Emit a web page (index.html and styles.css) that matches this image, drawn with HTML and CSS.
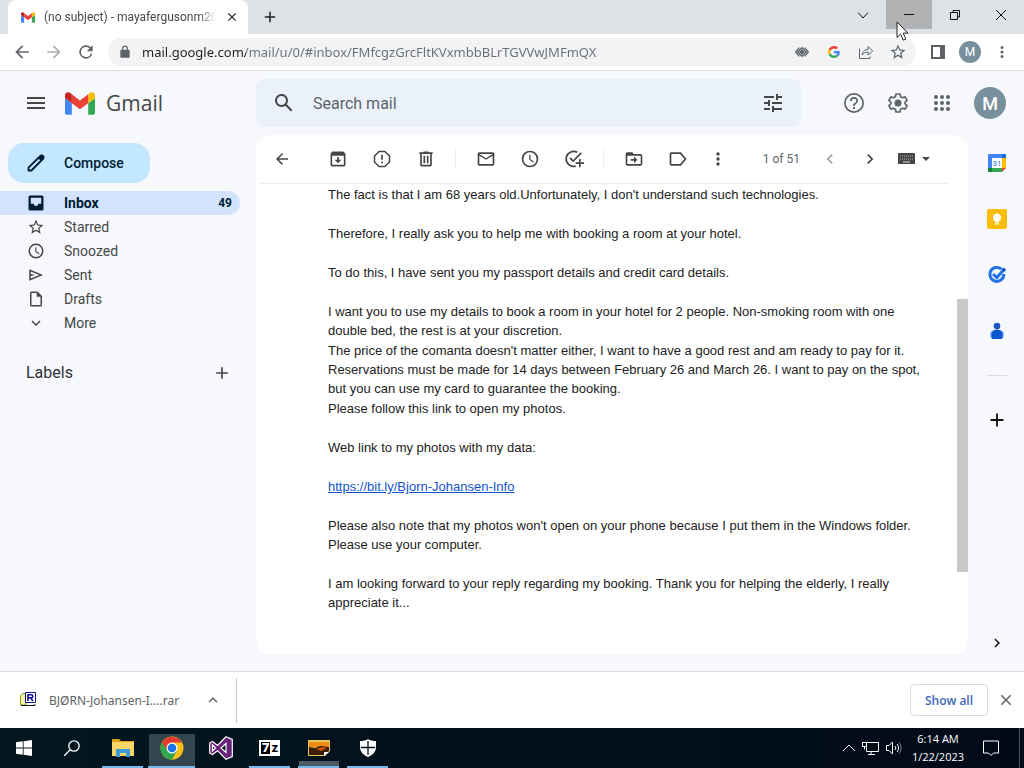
FILE: index.html
```html
<!DOCTYPE html>
<html lang="en">
<head>
    <meta charset="UTF-8">
    <meta name="viewport" content="width=device-width, initial-scale=1.0">
    <title>(no subject) - Gmail</title>
    <link rel="stylesheet" href="styles.css">
</head>
<body>

    <svg class="sprite" aria-hidden="true">
        <symbol id="gmail" viewBox="52 42 88 66">
            <path fill="#4285f4" d="M58 108h14V74L52 59v43c0 3.32 2.69 6 6 6"/>
            <path fill="#34a853" d="M120 108h14c3.32 0 6-2.69 6-6V59l-20 15"/>
            <path fill="#fbbc04" d="M120 48v26l20-15v-8c0-7.42-8.47-11.65-14.4-7.2"/>
            <path fill="#ea4335" d="M72 74V48l24 18 24-18v26L96 92"/>
            <path fill="#c5221f" d="M52 51v8l20 15V48l-5.6-4.2c-5.94-4.45-14.4-.22-14.4 7.2"/>
        </symbol>
        <symbol id="clock" viewBox="0 0 24 24">
            <path d="M12 2a10 10 0 1 0 0 20 10 10 0 0 0 0-20zm0 18a8 8 0 1 1 0-16 8 8 0 0 1 0 16zm.5-13H11v6l4.8 3.2.9-1.3-4.2-2.5z"/>
        </symbol>
        <symbol id="star" viewBox="0 0 24 24">
            <path d="M22 9.24l-7.19-.62L12 2 9.19 8.63 2 9.24l5.46 4.73L5.82 21 12 17.27 18.18 21l-1.63-7.03L22 9.24zM12 15.4l-3.76 2.27 1-4.28-3.32-2.88 4.38-.38L12 6.1l1.71 4.04 4.38.38-3.32 2.88 1 4.28L12 15.4z"/>
        </symbol>
        <symbol id="dots" viewBox="0 0 24 24">
            <path d="M12 8a2 2 0 1 0 0-4 2 2 0 0 0 0 4zm0 2a2 2 0 1 0 0 4 2 2 0 0 0 0-4zm0 6a2 2 0 1 0 0 4 2 2 0 0 0 0-4z"/>
        </symbol>
        <symbol id="arrow" viewBox="0 0 24 24">
            <path d="M20 11H7.83l5.59-5.59L12 4l-8 8 8 8 1.41-1.41L7.83 13H20v-2z"/>
        </symbol>
        <symbol id="chevron" viewBox="0 0 24 24">
            <path d="M10 6 8.6 7.4 13.2 12l-4.6 4.6L10 18l6-6z"/>
        </symbol>
        <symbol id="plus" viewBox="0 0 24 24">
            <path d="M19 13h-6v6h-2v-6H5v-2h6V5h2v6h6v2z"/>
        </symbol>
        <symbol id="cross" viewBox="0 0 24 24">
            <path d="M19 6.4 17.6 5 12 10.6 6.4 5 5 6.4l5.6 5.6L5 17.6 6.4 19l5.6-5.6 5.6 5.6 1.4-1.4-5.6-5.6z"/>
        </symbol>
    </svg>

    <div class="tabstrip">
        <div class="tab">
            <svg class="favicon"><use href="#gmail"/></svg>
            <span class="tab-title">(no subject) - mayafergusonm20</span>
            <button class="tab-close" aria-label="Close tab"><svg class="i14"><use href="#cross"/></svg></button>
        </div>
        <button class="new-tab" aria-label="New tab"><svg class="i18"><use href="#plus"/></svg></button>
        <div class="window-buttons">
            <button aria-label="Search tabs"><svg class="i12 line" viewBox="0 0 12 12"><path d="M1 3.500 6 9l5-5.500"/></svg></button>
            <button class="minimize" aria-label="Minimize">
                <svg class="i12 line" viewBox="0 0 12 12"><path d="M1 5.500h10"/></svg>
                <svg class="cursor" viewBox="0 0 13 20"><path d="M1 1v15.500l3.600-3.400 2.600 6 2.600-1.100-2.600-5.900H12z" fill="#fff" stroke="#222"/></svg>
            </button>
            <button aria-label="Restore"><svg class="i12 line" viewBox="0 0 12 12"><path d="M1.500 3.500h7v7h-7zM4 3V1.500h6.500V8H9"/></svg></button>
            <button aria-label="Close"><svg class="i12 line" viewBox="0 0 12 12"><path d="m1 1 10 10M11 1 1 11"/></svg></button>
        </div>
    </div>

    <div class="toolbar">
        <button class="tool" aria-label="Back"><svg class="i20"><use href="#arrow"/></svg></button>
        <button class="tool disabled" aria-label="Forward"><svg class="i20 flip"><use href="#arrow"/></svg></button>
        <button class="tool" aria-label="Reload"><svg class="i20" viewBox="0 0 24 24"><path d="M17.650 6.350A8 8 0 1 0 19.730 14h-2.080A6 6 0 1 1 12 6c1.660 0 3.140.690 4.220 1.780L13 11h7V4z"/></svg></button>
        <div class="omnibox">
            <svg class="i16 lock" viewBox="0 0 24 24"><path d="M18 8h-1V6A5 5 0 0 0 7 6v2H6a2 2 0 0 0-2 2v10c0 1.100.900 2 2 2h12a2 2 0 0 0 2-2V10a2 2 0 0 0-2-2zM9 8V6a3 3 0 0 1 6 0v2z"/></svg>
            <input class="url" type="text" aria-label="Address" value="mail.google.com/mail/u/0/#inbox/FMfcgzGrcFltKVxmbbBLrTGVVwJMFmQX">
            <button class="tool" aria-label="Protocol handler"><svg class="i14" viewBox="0 0 16 16"><path d="M8 2 14 8l-6 6-6-6z"/><path d="M5 3 .700 8 5 13M11 3l4.300 5-4.300 5" fill="none" stroke="#5f6368" stroke-width="1.500"/><path d="m8 4.500 3.500 3.500L8 11.500 4.500 8z" fill="none" stroke="#f1f3f4" stroke-width=".6"/></svg></button>
            <button class="tool" aria-label="Search with Google">
                <svg class="i12" viewBox="0 0 48 48">
                    <path fill="#ea4335" d="M24 9.500c3.540 0 6.710 1.220 9.210 3.600l6.850-6.850C35.900 2.380 30.470 0 24 0 14.620 0 6.510 5.380 2.560 13.220l7.980 6.190C12.430 13.720 17.740 9.500 24 9.500z"/>
                    <path fill="#4285f4" d="M46.980 24.550c0-1.570-.15-3.090-.38-4.550H24v9.020h12.940c-.58 2.960-2.260 5.480-4.780 7.180l7.730 6c4.510-4.180 7.090-10.360 7.090-17.650z"/>
                    <path fill="#fbbc05" d="M10.530 28.590A14.500 14.500 0 0 1 9.770 24c0-1.600.27-3.140.76-4.590l-7.980-6.190A23.900 23.900 0 0 0 0 24c0 3.880.92 7.540 2.560 10.780l7.970-6.190z"/>
                    <path fill="#34a853" d="M24 48c6.480 0 11.930-2.130 15.890-5.810l-7.730-6c-2.150 1.450-4.920 2.300-8.160 2.300-6.260 0-11.570-4.220-13.470-9.910l-7.980 6.190C6.510 42.620 14.620 48 24 48z"/>
                </svg>
            </button>
            <button class="tool" aria-label="Share"><svg class="i16 stroked" viewBox="0 0 16 16"><path d="M1.500 4.500v10h10.500v-2M4 11c.5-4 3-5.500 6-5.500V2.500L14.800 7 10 11V8C7.500 8 5.500 8.800 4 11z"/></svg></button>
            <button class="tool" aria-label="Bookmark"><svg class="i18"><use href="#star"/></svg></button>
        </div>
        <button class="tool panel-button" aria-label="Side panel"><svg class="i14" viewBox="0 0 14 14"><path d="M0 0h14v14H0zM2 2v10h7V2z" fill-rule="evenodd"/></svg></button>
        <button class="tool" aria-label="Profile"><span class="avatar small">M</span></button>
        <button class="tool" aria-label="Chrome menu"><svg class="i18"><use href="#dots"/></svg></button>
    </div>

    <div class="gmail">
        <header class="header">
            <div class="brand">
                <button class="menu" aria-label="Main menu"><svg class="i24" viewBox="0 0 24 24"><path d="M3 18h18v-2H3zm0-5h18v-2H3zm0-7v2h18V6z"/></svg></button>
                <a class="logo" href="#inbox"><svg class="logo-mark"><use href="#gmail"/></svg>Gmail</a>
            </div>
            <form class="search">
                <button type="button" aria-label="Search"><svg class="i24" viewBox="0 0 24 24"><path d="M20.490 19l-5.730-5.730A6.500 6.500 0 1 0 13.270 14.760L19 20.490 20.490 19zM5 9.500a4.500 4.500 0 1 1 9 0 4.500 4.500 0 0 1-9 0z"/></svg></button>
                <input type="text" aria-label="Search mail" placeholder="Search mail">
                <button type="button" aria-label="Search options"><svg class="i24" viewBox="0 0 24 24"><path d="M3 17v2h6v-2H3zM3 5v2h10V5H3zm10 16v-2h8v-2h-8v-2h-2v6h2zM7 9v2H3v2h4v2h2V9H7zm14 4v-2H11v2h10zm-6-4h2V7h4V5h-4V3h-2v6z"/></svg></button>
            </form>
            <div class="account">
                <button aria-label="Support"><svg class="i24" viewBox="0 0 24 24"><path d="M11 18h2v-2h-2v2zm1-16a10 10 0 1 0 0 20 10 10 0 0 0 0-20zm0 18.300a8.300 8.300 0 1 1 0-16.600 8.300 8.300 0 0 1 0 16.600zm0-14.300a4 4 0 0 0-4 4h1.700a2.300 2.300 0 1 1 4.600 0c0 2-3.300 1.750-3.300 5h2c0-2.250 3-2.500 3-5a4 4 0 0 0-4-4z"/></svg></button>
                <button aria-label="Settings"><svg class="i24" viewBox="0 0 24 24"><path d="M10 3h4l.6 2.700 1.900 1.100 2.600-.9 2 3.500-2 1.800v1.600l2 1.800-2 3.500-2.600-.9-1.900 1.100L14 21h-4l-.6-2.700-1.900-1.100-2.600.9-2-3.500 2-1.800v-1.600l-2-1.800 2-3.500 2.600.9 1.900-1.100z" fill="none" stroke="currentColor" stroke-width="1.700" stroke-linejoin="round"/><circle cx="12" cy="12" r="3.500"/></svg></button>
                <button aria-label="Google apps">
                    <svg class="i24" viewBox="0 0 24 24">
                        <circle cx="6" cy="6" r="2"/><circle cx="12" cy="6" r="2"/><circle cx="18" cy="6" r="2"/>
                        <circle cx="6" cy="12" r="2"/><circle cx="12" cy="12" r="2"/><circle cx="18" cy="12" r="2"/>
                        <circle cx="6" cy="18" r="2"/><circle cx="12" cy="18" r="2"/><circle cx="18" cy="18" r="2"/>
                    </svg>
                </button>
                <a class="avatar" href="#account">M</a>
            </div>
        </header>

        <div class="content">
            <aside class="sidebar">
                <button class="compose">
                    <svg class="i20" viewBox="0 0 24 24"><path d="M20.400 3.600a2.200 2.200 0 0 0-3.200 0L3 17.500V21h3.500L20.400 6.900a2.300 2.300 0 0 0 0-3.300z" fill="none" stroke="currentColor" stroke-width="2.200" stroke-linejoin="round"/><path d="m14 6 3-3h3l1.500 1.500V7l-3 3z"/></svg>
                    Compose
                </button>
                <nav class="folders">
                    <a class="active" href="#inbox"><svg class="i18" viewBox="0 0 24 24"><path d="M20 2H4a2 2 0 0 0-2 2v16c0 1.100.9 2 2 2h16a2 2 0 0 0 2-2V4a2 2 0 0 0-2-2zm-1 11h-4a3 3 0 0 1-6 0H5V5h14z"/></svg>Inbox<span class="count">49</span></a>
                    <a href="#starred"><svg class="i18"><use href="#star"/></svg>Starred</a>
                    <a href="#snoozed"><svg class="i18"><use href="#clock"/></svg>Snoozed</a>
                    <a href="#sent"><svg class="i18" viewBox="0 0 24 24"><path d="M3 4.200v15.600L21.500 12zM5 7.200 16.400 12 5 16.800v-3.500l6-1.300-6-1.300z"/></svg>Sent</a>
                    <a href="#drafts"><svg class="i18" viewBox="0 0 24 24"><path d="M14 2H6a2 2 0 0 0-2 2v16c0 1.100.9 2 2 2h12a2 2 0 0 0 2-2V8zm4 18H6V4h7v5h5z"/></svg>Drafts</a>
                    <a href="#more"><svg class="i18 down"><use href="#chevron"/></svg>More</a>
                </nav>
                <div class="labels">
                    <h2>Labels</h2>
                    <button aria-label="Create new label"><svg class="i20"><use href="#plus"/></svg></button>
                </div>
            </aside>

            <main class="mail">
                <div class="mail-toolbar">
                    <button class="back" aria-label="Back to Inbox"><svg class="i18"><use href="#arrow"/></svg></button>
                    <div class="group">
                        <button aria-label="Archive"><svg class="i20" viewBox="0 0 24 24"><path d="m20.500 5.200-1.400-1.700A1.500 1.500 0 0 0 18 3H6c-.5 0-.9.200-1.200.6L3.500 5.200C3.200 5.600 3 6 3 6.500V19c0 1.100.9 2 2 2h14a2 2 0 0 0 2-2V6.500c0-.5-.2-.9-.5-1.300zM5 19V8h14v11zM11 9.500V13H8l4 4 4-4h-3V9.500z"/></svg></button>
                        <button aria-label="Report spam"><svg class="i20" viewBox="0 0 24 24"><path d="M8.500 3h7L21 8.500v7L15.500 21h-7L3 15.500v-7z" fill="none" stroke="currentColor" stroke-width="1.800" stroke-linejoin="round"/><path d="M11 7h2v6h-2zm0 8h2v2h-2z"/></svg></button>
                        <button aria-label="Delete"><svg class="i20" viewBox="0 0 24 24"><path d="M15 4V3H9v1H4v2h1v13c0 1.100.9 2 2 2h10a2 2 0 0 0 2-2V6h1V4zm2 15H7V6h10zM9 8h2v9H9zm4 0h2v9h-2z"/></svg></button>
                    </div>
                    <div class="group divided">
                        <button aria-label="Mark as unread"><svg class="i20" viewBox="0 0 24 24"><path d="M20 4H4a2 2 0 0 0-2 2v12c0 1.100.9 2 2 2h16a2 2 0 0 0 2-2V6a2 2 0 0 0-2-2zm0 14H4V8l8 5 8-5zm-8-7L4 6h16z"/></svg></button>
                        <button aria-label="Snooze"><svg class="i20"><use href="#clock"/></svg></button>
                        <button aria-label="Add to tasks"><svg class="i20" viewBox="0 0 24 24"><path d="M16 4a9 9 0 1 0-2 16.500" fill="none" stroke="currentColor" stroke-width="2"/><path d="M21.500 5.500 11 16l-4.500-4.500L8 10l3 3.100 9-9.100zM18 12h2v4h4v2h-4v4h-2v-4h-4v-2h4z"/></svg></button>
                    </div>
                    <div class="group divided">
                        <button aria-label="Move to"><svg class="i20" viewBox="0 0 24 24"><path d="M20 6h-8l-2-2H4a2 2 0 0 0-2 2v12c0 1.100.9 2 2 2h16a2 2 0 0 0 2-2V8a2 2 0 0 0-2-2zm0 12H4V8h16zm-8-1 4-4-4-4v3H8v2h4z"/></svg></button>
                        <button aria-label="Labels"><svg class="i20" viewBox="0 0 24 24"><path d="M4 5h11l6 7-6 7H4a1 1 0 0 1-1-1V6a1 1 0 0 1 1-1z" fill="none" stroke="currentColor" stroke-width="2"/></svg></button>
                    </div>
                    <button class="more" aria-label="More"><svg class="i20"><use href="#dots"/></svg></button>
                    <div class="pager">
                        <span>1 of 51</span>
                        <button class="disabled" aria-label="Newer"><svg class="i20 flip"><use href="#chevron"/></svg></button>
                        <button aria-label="Older"><svg class="i20"><use href="#chevron"/></svg></button>
                        <button class="keyboard" aria-label="Input tools">
                            <svg class="i20" viewBox="0 0 20 20"><path d="M2 4h15a1 1 0 0 1 1 1v10H1V5a1 1 0 0 1 1-1z"/><path d="M3 7h13M3 10h13" stroke="#bbb" stroke-dasharray="1 1"/><path d="M6 13h7" stroke="#ddd"/></svg>
                            <svg class="caret" viewBox="0 0 8 4"><path d="M0 0h8L4 4z"/></svg>
                        </button>
                    </div>
                </div>
                <article class="message">
                    <p>The fact is that I am 68 years old.Unfortunately, I don't understand such technologies.</p>
                    <p>Therefore, I really ask you to help me with booking a room at your hotel.</p>
                    <p>To do this, I have sent you my passport details and credit card details.</p>
                    <div class="lines">
                        <p>I want you to use my details to book a room in your hotel for 2 people. Non-smoking room with one double bed, the rest is at your discretion.</p>
                        <p>The price of the comanta doesn't matter either, I want to have a good rest and am ready to pay for it. Reservations must be made for 14 days between February 26 and March 26. I want to pay on the spot, but you can use my card to guarantee the booking.</p>
                        <p>Please follow this link to open my photos.</p>
                    </div>
                    <p>Web link to my photos with my data:</p>
                    <p><a href="https://bit.ly/Bjorn-Johansen-Info">https://bit.ly/Bjorn-Johansen-Info</a></p>
                    <p>Please also note that my photos won't open on your phone because I put them in the Windows folder. Please use your computer.</p>
                    <p>I am looking forward to your reply regarding my booking. Thank you for helping the elderly, I really appreciate it...</p>
                </article>
                <div class="scroll-thumb"></div>
            </main>

            <aside class="apps-panel">
                <button aria-label="Calendar">
                    <svg class="i20" viewBox="0 0 20 20">
                        <path fill="#fff" d="M4 4h12v12H4z"/>
                        <path fill="#4285f4" d="M2 1h13v4H5v10H1V2a1 1 0 0 1 1-1z"/>
                        <path fill="#1967d2" d="M15 1h3a1 1 0 0 1 1 1v3h-4z"/>
                        <path fill="#fbbc04" d="M15 5h4v10h-4z"/>
                        <path fill="#34a853" d="M5 15h10v4H5z"/>
                        <path fill="#188038" d="M1 15h4v4H2a1 1 0 0 1-1-1z"/>
                        <path fill="#ea4335" d="M15 15h4l-4 4z"/>
                        <text x="10" y="13" text-anchor="middle" class="cal-day">31</text>
                    </svg>
                </button>
                <button aria-label="Keep"><svg class="i20" viewBox="0 0 20 20"><rect x="0" y="0" width="20" height="20" rx="2" fill="#fbbc04"/><circle cx="10" cy="8.500" r="4" fill="#fff"/><path fill="#fff" d="M8 11h4v2.500H8zM8 14.300h4v1.200H8z"/></svg></button>
                <button aria-label="Tasks"><svg class="i20" viewBox="0 0 20 20"><path d="M14.500 4.200A7 7 0 1 0 16.800 9" fill="none" stroke="#2373e8" stroke-width="3"/><path d="m6 9 3.800 3.500 7.700-8.500" fill="none" stroke="#2373e8" stroke-width="3"/><circle cx="16.800" cy="4.800" r="1.900" fill="#1557c0"/></svg></button>
                <button aria-label="Contacts"><svg class="i20" viewBox="0 0 20 20"><circle cx="10" cy="5" r="3.300" fill="#1a56c4"/><rect x="3.500" y="9.500" width="13" height="8.500" rx="3.500" fill="#4285f4"/><path d="M5 18v-5a5 4.500 0 0 1 10 0v5z" fill="#0b57d0"/></svg></button>
                <hr>
                <button aria-label="Get add-ons"><svg class="i24"><use href="#plus"/></svg></button>
                <button class="hide-panel" aria-label="Hide side panel"><svg class="i18"><use href="#chevron"/></svg></button>
            </aside>
        </div>
    </div>

    <div class="downloads">
        <div class="download">
            <svg class="i16" viewBox="0 0 16 16"><path d="M.500 13V4l2-2.500H6V13z" fill="#f4f4b0" stroke="#9a9a10"/><path d="M1 13.500h14V12" fill="none" stroke="#111"/><path d="M5.500.500h10v10h-10z" fill="#fff" stroke="#10108a"/><path d="M8 9V2.800h3.300a1.500 1.500 0 0 1 0 3H8m2.800 0 2 3.200" fill="none" stroke="#10108a" stroke-width="1.600"/></svg>
            <a href="#file">BJØRN-Johansen-I....rar</a>
            <button aria-label="File options"><svg class="i18 up"><use href="#chevron"/></svg></button>
        </div>
        <button class="show-all">Show all</button>
        <button class="downloads-close" aria-label="Close downloads"><svg class="i18"><use href="#cross"/></svg></button>
    </div>

    <footer class="taskbar">
        <button class="system" aria-label="Start"><svg class="i16" viewBox="0 0 16 16"><path d="M0 2.300 6.800 1.300v6.200H0zM7.600 1.200 16 0v7.500H7.600zM0 8.400h6.800v6.300L0 13.700zM7.600 8.400H16V16l-8.400-1.200z"/></svg></button>
        <button class="system" aria-label="Search"><svg class="i18" viewBox="0 0 18 18"><circle cx="11" cy="7" r="5.200" fill="none" stroke="#fff" stroke-width="1.300"/><path d="m7.200 10.800-6 6" stroke="#fff" stroke-width="1.300"/></svg></button>
        <button class="open first" aria-label="File Explorer"><svg class="i24" viewBox="0 0 24 24"><path fill="#e3a21a" d="M1 3h7l2 2h13v4H1z"/><path fill="#fbd566" d="M1 6h22v14H1z"/><path fill="#3f9bd6" d="M5 21v-8h14v8h-4v-4H9v4z"/></svg></button>
        <button class="open current" aria-label="Chrome">
            <svg class="i24" viewBox="0 0 48 48">
                <circle cx="24" cy="24" r="23" fill="#fbc116"/>
                <path fill="#2da94f" d="M24 24 4.100 12.500a23 23 0 0 0 19.900 34.500l10-17.500z"/>
                <path fill="#e33b2e" d="M24 13h19.900A23 23 0 0 0 4.100 12.500L14.500 29.500z"/>
                <circle cx="24" cy="24" r="11" fill="#fff"/>
                <circle cx="24" cy="24" r="8.600" fill="#1a73e8"/>
            </svg>
        </button>
        <button aria-label="Visual Studio"><svg class="i24" viewBox="0 0 24 24"><path fill="#68217a" stroke="#fff" stroke-width="1.200" d="M17 .800 23.300 3.500v17L17 23.200l-8.500-8.500L3.500 18.500.700 17V7l2.800-1.500 5 4zM17 7.500 12 12l5 4.500zM3.500 9v6l3-3z" fill-rule="evenodd"/></svg></button>
        <button class="open" aria-label="7-Zip"><span class="zip"><b>7</b>z</span></button>
        <button class="open stacked" aria-label="Pictures"><svg class="i22" viewBox="0 0 22 18"><path fill="#e7c25a" d="M0 1h22v11l-5 5H0z"/><path fill="#ee8b12" d="M1 3h20v5H1z"/><path fill="#3c1d08" d="m1 8 6 1 5-2 9 1v4l-5 4H1z"/><path fill="#c9520a" d="m8 10 6-2 5 1-6 3z"/><path fill="#fff" d="M16 17v-4h5z"/></svg></button>
        <button class="open" aria-label="Security"><svg class="i18" viewBox="0 0 18 18"><path d="M9 0c2 1.500 4.500 2 8 2v6c0 5-3.500 8-8 10-4.500-2-8-5-8-10V2c3.500 0 6-.5 8-2z"/><path d="M9 2v14M2 8.500h14" stroke="#041521" stroke-width="1.300"/></svg></button>
        <div class="tray">
            <svg class="i14 thin" viewBox="0 0 14 14"><path d="m1 10 6-6 6 6"/></svg>
            <svg class="i18 thin" viewBox="0 0 18 18"><path d="M5 3.500h11.500v9H4.500V8M9 12.500v3M6 15.500h7M.500 3.500h4v4h-4zM2.500 7.500v3"/></svg>
            <svg class="i16 thin" viewBox="0 0 16 16"><path d="M.500 5.500H3l3.500-3.500v12L3 10.500H.500zM9 6a3 3 0 0 1 0 4M11 4a6 6 0 0 1 0 8"/><path d="M13 2.500a8 8 0 0 1 0 11" stroke="#7d858f"/></svg>
            <div class="time"><span>6:14 AM</span><span>1/22/2023</span></div>
            <button class="notifications" aria-label="Notifications"><svg class="i18 thin" viewBox="0 0 18 18"><path d="M1.500 2h15v12h-5L9 16.500 6.500 14h-5z"/></svg></button>
        </div>
    </footer>

</body>
</html>
```

FILE: styles.css
```css
* {
    margin: 0;
    padding: 0;
    box-sizing: border-box;
}

body {
    display: flex;
    flex-direction: column;
    min-height: 100vh;
    font-family: Roboto, "Liberation Sans", sans-serif;
    font-size: 14px;
    color: #202124;
    background: #fff;
}

button {
    display: flex;
    align-items: center;
    justify-content: center;
    flex-shrink: 0;
    border: none;
    background: none;
    font: inherit;
    color: inherit;
    cursor: pointer;
}

input {
    border: none;
    outline: none;
    background: none;
    min-width: 0;
}

a {
    color: inherit;
    text-decoration: none;
}

svg {
    display: block;
    flex-shrink: 0;
    fill: currentColor;
}

.sprite {
    display: none;
}

.i12 { width: 12px; height: 12px; }
.i14 { width: 14px; height: 14px; }
.i16 { width: 16px; height: 16px; }
.i18 { width: 18px; height: 18px; }
.i20 { width: 20px; height: 20px; }
.i22 { width: 22px; height: 18px; }
.i24 { width: 24px; height: 24px; }

.flip { transform: rotate(180deg); }
.down { transform: rotate(90deg); }
.up { transform: rotate(-90deg); }

.line {
    fill: none;
    stroke: #111;
}

.stroked {
    fill: none;
    stroke: currentColor;
}

.thin {
    fill: none;
    stroke: #fff;
}

.disabled {
    opacity: 0.5;
}

.avatar {
    display: flex;
    align-items: center;
    justify-content: center;
    width: 32px;
    height: 32px;
    border-radius: 50%;
    background: #78909c;
    color: #fff;
    font-size: 18px;
    font-weight: 500;
}

.avatar.small {
    width: 22px;
    height: 22px;
    font-size: 12px;
    font-weight: normal;
}

/* browser window */
.tabstrip {
    display: flex;
    height: 34px;
    padding-left: 8px;
    background: #dee1e6;
}

.tab {
    display: flex;
    align-items: center;
    width: 240px;
    padding: 0 8px 0 13px;
    border-radius: 8px 8px 0 0;
    background: #fff;
}

.favicon {
    width: 14px;
    height: 11px;
}

.tab-title {
    flex: 1;
    margin-left: 9px;
    overflow: hidden;
    white-space: nowrap;
    font-size: 12px;
    color: #45484c;
    mask-image: linear-gradient(to right, #000 90%, transparent);
}

.tab-close {
    width: 16px;
    margin-left: 8px;
}

.new-tab {
    width: 28px;
    margin-left: 8px;
}

.window-buttons {
    display: flex;
    margin-left: auto;
}

.window-buttons button {
    position: relative;
    width: 46px;
    height: 29px;
}

.window-buttons .minimize {
    background: #b0b1b3;
}

.cursor {
    position: absolute;
    left: 10px;
    top: 21px;
    width: 13px;
    height: 20px;
    z-index: 2;
}

.toolbar {
    display: flex;
    align-items: center;
    height: 37px;
    padding: 0 6px;
    border-bottom: 1px solid #dadce0;
    color: #5f6368;
}

.tool {
    width: 32px;
    height: 28px;
}

.omnibox {
    display: flex;
    flex: 1;
    align-items: center;
    height: 28px;
    margin-left: 6px;
    padding: 0 2px 0 9px;
    border-radius: 14px;
    background: #f1f3f4;
}

.lock {
    width: 16px;
    height: 14px;
}

/* host name is darker than the path */
.url {
    flex: 1;
    margin-left: 9px;
    font-family: "Noto Sans", "Open Sans", sans-serif;
    font-size: 13px;
    color: transparent;
    background: linear-gradient(to right, #202124 104px, #6b6f74 104px);
    -webkit-background-clip: text;
    background-clip: text;
}

.panel-button {
    margin-left: 6px;
}

/* gmail */
.gmail {
    display: flex;
    flex: 1;
    flex-direction: column;
    background: #f6f8fc;
}

.header {
    display: flex;
    align-items: center;
    height: 64px;
    color: #444746;
}

.brand {
    display: flex;
    align-items: center;
    width: 256px;
    padding-left: 24px;
}

.menu {
    width: 24px;
}

.logo {
    display: flex;
    align-items: center;
    gap: 11px;
    margin-left: 17px;
    font-family: "Open Sans", Roboto, sans-serif;
    font-size: 21px;
}

.logo-mark {
    width: 30px;
    height: 23px;
}

.search {
    display: flex;
    flex: 1;
    align-items: center;
    height: 48px;
    padding: 0 16px;
    border-radius: 8px;
    background: #eaf1fb;
}

.search input {
    flex: 1;
    margin: 0 16px 0 17px;
    font-family: Roboto, sans-serif;
    font-size: 16px;
}

.search input::placeholder {
    color: #5f6368;
}

.account {
    display: flex;
    align-items: center;
    margin-left: 31px;
    padding-right: 18px;
    color: #5f6368;
}

.account button {
    width: 44px;
    height: 44px;
}

.account .avatar {
    margin-left: 10px;
}

.content {
    display: flex;
    flex: 1;
}

.sidebar {
    width: 256px;
    padding-right: 16px;
    color: #444746;
}

.compose {
    gap: 18px;
    height: 40px;
    margin: 8px 0 8px 8px;
    padding: 0 26px 0 18px;
    border-radius: 16px;
    background: #c2e7ff;
    color: #001d35;
    font-weight: 500;
}

.folders a {
    display: flex;
    align-items: center;
    height: 24px;
    padding: 0 8px 0 27px;
    border-radius: 0 12px 12px 0;
}

.folders svg {
    margin-right: 19px;
}

.folders .active {
    background: #d3e3fd;
    color: #001d35;
    font-weight: bold;
}

.count {
    margin-left: auto;
    font-size: 12px;
}

.labels {
    display: flex;
    align-items: center;
    justify-content: space-between;
    margin-top: 24px;
    padding: 0 8px 0 26px;
    height: 27px;
}

.labels h2 {
    font-size: 16px;
    font-weight: normal;
    color: #303235;
}

.mail {
    position: relative;
    flex: 1;
    margin-bottom: 16px;
    border-radius: 16px;
    background: #fff;
}

.mail-toolbar {
    display: flex;
    align-items: center;
    height: 49px;
    margin: 0 20px 0 4px;
    border-bottom: 1px solid #eceef0;
    color: #444746;
}

.back {
    width: 20px;
    margin: 0 36px 0 12px;
}

.group {
    display: flex;
    gap: 24px;
}

.divided {
    margin-left: 19px;
    padding-left: 20px;
    border-left: 1px solid #eceef0;
}

.more {
    margin-left: 20px;
}

.pager {
    display: flex;
    align-items: center;
    gap: 20px;
    margin-left: auto;
    padding-right: 18px;
    font-size: 12px;
    color: #5f6368;
}

.pager button {
    color: #444746;
}

.keyboard {
    gap: 5px;
    margin-left: -3px;
}

.caret {
    width: 8px;
    height: 4px;
}

.message {
    display: flex;
    flex-direction: column;
    gap: 20px;
    padding: 1px 40px 24px 72px;
    font-family: "Liberation Sans", Arial, sans-serif;
    font-size: 13px;
    line-height: 19px;
    color: #222;
}

.message a {
    color: #15c;
    text-decoration: underline;
}

.lines {
    display: flex;
    flex-direction: column;
    gap: 1px;
}

.scroll-thumb {
    position: absolute;
    right: 0;
    top: 164px;
    width: 11px;
    height: 273px;
    background: #c8c8c8;
}

.apps-panel {
    display: flex;
    flex-direction: column;
    align-items: center;
    width: 56px;
    padding-left: 2px;
    color: #111;
}

.apps-panel button {
    width: 54px;
    height: 56px;
}

.apps-panel .i24 {
    width: 22px;
    height: 22px;
}

.apps-panel hr {
    width: 20px;
    margin: 16px 0;
    border: none;
    border-top: 1px solid #dadce0;
}

.apps-panel .hide-panel {
    margin-top: auto;
}

.cal-day {
    font-family: Roboto, sans-serif;
    font-size: 8px;
    fill: #1a73e8;
}

/* downloads bar */
.downloads {
    display: flex;
    align-items: center;
    height: 57px;
    padding-right: 8px;
    border-top: 1px solid #dadce0;
    color: #5f6368;
}

.download {
    display: flex;
    align-items: center;
    width: 237px;
    height: 45px;
    padding: 0 14px 0 20px;
    border-right: 1px solid #c4c6ca;
    font-family: "Noto Sans", "Open Sans", sans-serif;
    font-size: 12px;
}

.download a {
    flex: 1;
    margin-left: 13px;
    white-space: nowrap;
}

.show-all {
    width: 78px;
    height: 32px;
    margin-left: auto;
    border: 1px solid #dadce0;
    border-radius: 4px;
    font-family: "Open Sans", "Noto Sans", sans-serif;
    font-size: 12px;
    font-weight: 600;
    color: #3d68b8;
}

.downloads-close {
    width: 20px;
    margin-left: 8px;
}

/* windows taskbar */
.taskbar {
    display: flex;
    height: 40px;
    background: linear-gradient(to right, #021720, #020a18);
    color: #fff;
}

.taskbar > button {
    width: 49px;
    padding: 0 4px;
}

.taskbar .system {
    width: 48px;
}

.taskbar .first {
    margin-left: 2px;
}

.taskbar .open {
    position: relative;
}

.taskbar .open::after {
    content: "";
    position: absolute;
    left: 4px;
    right: 4px;
    bottom: 0;
    height: 2px;
    background: #76b9ed;
}

.taskbar .current {
    background: linear-gradient(#33454f, #33454f) center bottom / 46px 34px no-repeat;
}

.taskbar .current::after {
    left: 1px;
    right: 1px;
}

.taskbar .stacked {
    background: linear-gradient(#4a5a66, #4a5a66) center bottom / 40px 7px no-repeat;
}

.zip {
    display: flex;
    padding: 2px;
    background: #fff;
    color: #000;
    font-size: 13px;
    font-weight: bold;
    line-height: 12px;
}

.zip b {
    padding: 0 1px;
    margin-right: 1px;
    background: #000;
    color: #fff;
}

.tray {
    display: flex;
    align-items: center;
    gap: 6px;
    margin-left: auto;
    padding-right: 4px;
}

.time {
    display: flex;
    flex-direction: column;
    align-items: center;
    width: 60px;
    font-family: "Open Sans", "Noto Sans", sans-serif;
    font-size: 11px;
    line-height: 18px;
}

.notifications {
    width: 46px;
    height: 40px;
    padding-right: 12px;
    border-right: 1px solid #4b5561;
}
```
